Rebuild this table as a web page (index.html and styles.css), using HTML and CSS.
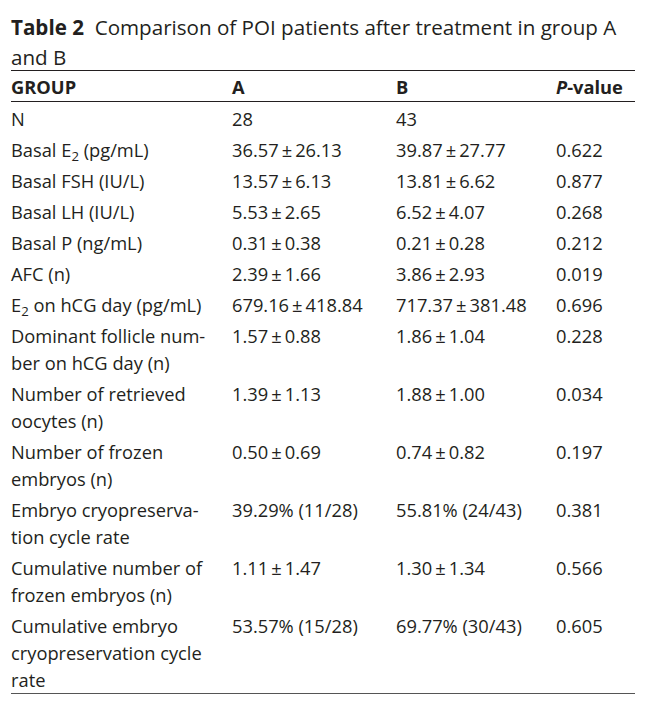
FILE: index.html
```html
<!DOCTYPE html>
<html lang="en">
<head>
<meta charset="utf-8">
<title>Table 2</title>
<link rel="stylesheet" href="styles.css">
</head>
<body>
<div class="page">
  <p class="caption"><b class="label">Table 2</b>&nbsp; Comparison of POI patients after treatment in group A and B</p>
  <table class="data">
    <colgroup>
      <col class="c-group">
      <col class="c-a">
      <col class="c-b">
      <col class="c-p">
    </colgroup>
    <thead>
      <tr>
        <th>GROUP</th>
        <th>A</th>
        <th>B</th>
        <th><i>P</i>-value</th>
      </tr>
    </thead>
    <tbody>
      <tr><td>N</td><td>28</td><td>43</td><td></td></tr>
      <tr><td>Basal E<sub>2</sub> (pg/mL)</td><td>36.57&thinsp;±&thinsp;26.13</td><td>39.87&thinsp;±&thinsp;27.77</td><td>0.622</td></tr>
      <tr><td>Basal FSH (IU/L)</td><td>13.57&thinsp;±&thinsp;6.13</td><td>13.81&thinsp;±&thinsp;6.62</td><td>0.877</td></tr>
      <tr><td>Basal LH (IU/L)</td><td>5.53&thinsp;±&thinsp;2.65</td><td>6.52&thinsp;±&thinsp;4.07</td><td>0.268</td></tr>
      <tr><td>Basal P (ng/mL)</td><td>0.31&thinsp;±&thinsp;0.38</td><td>0.21&thinsp;±&thinsp;0.28</td><td>0.212</td></tr>
      <tr><td>AFC (n)</td><td>2.39&thinsp;±&thinsp;1.66</td><td>3.86&thinsp;±&thinsp;2.93</td><td>0.019</td></tr>
      <tr><td>E<sub>2</sub> on hCG day (pg/mL)</td><td>679.16&thinsp;±&thinsp;418.84</td><td>717.37&thinsp;±&thinsp;381.48</td><td>0.696</td></tr>
      <tr><td>Dominant follicle num-<br>ber on hCG day (n)</td><td>1.57&thinsp;±&thinsp;0.88</td><td>1.86&thinsp;±&thinsp;1.04</td><td>0.228</td></tr>
      <tr><td>Number of retrieved<br>oocytes (n)</td><td>1.39&thinsp;±&thinsp;1.13</td><td>1.88&thinsp;±&thinsp;1.00</td><td>0.034</td></tr>
      <tr><td>Number of frozen<br>embryos (n)</td><td>0.50&thinsp;±&thinsp;0.69</td><td>0.74&thinsp;±&thinsp;0.82</td><td>0.197</td></tr>
      <tr><td>Embryo cryopreserva-<br>tion cycle rate</td><td>39.29% (11/28)</td><td>55.81% (24/43)</td><td>0.381</td></tr>
      <tr><td>Cumulative number of<br>frozen embryos (n)</td><td>1.11&thinsp;±&thinsp;1.47</td><td>1.30&thinsp;±&thinsp;1.34</td><td>0.566</td></tr>
      <tr class="last"><td>Cumulative embryo<br>cryopreservation cycle<br>rate</td><td>53.57% (15/28)</td><td>69.77% (30/43)</td><td>0.605</td></tr>
    </tbody>
  </table>
</div>
</body>
</html>
```
FILE: styles.css
```css
html, body {
  margin: 0;
  padding: 0;
  background: #ffffff;
}

body {
  font-family: "Open Sans", "Noto Sans", sans-serif;
  color: #231f20;
}

.page {
  padding: 13px 18px 0 11px;
}

.caption {
  margin: 0 0 -2px;
  width: 624px;
  font-size: 20.6px;
  line-height: 29.5px;
  padding: 0;
}

.caption .label {
  font-weight: 700;
}

.data {
  width: 624px;
  border-collapse: collapse;
  table-layout: fixed;
  font-size: 18.3px;
}

.c-group { width: 221px; }
.c-a { width: 164px; }
.c-b { width: 160px; }
.c-p { width: 79px; }

.data th,
.data td {
  padding: 3px 0 1px;
  text-align: left;
  vertical-align: top;
  line-height: 27px;
}

.data thead th {
  font-weight: 700;
  padding: 2px 0 1px;
}

.data thead tr {
  border-top: 1.5px solid #231f20;
  border-bottom: 1px solid #231f20;
}

.data tbody tr.last td {
  padding-bottom: 0;
}

.data tbody tr.last {
  border-bottom: 1px solid #555555;
}

.data sub {
  font-size: 0.72em;
  line-height: 0;
  vertical-align: -0.3em;
}
```
